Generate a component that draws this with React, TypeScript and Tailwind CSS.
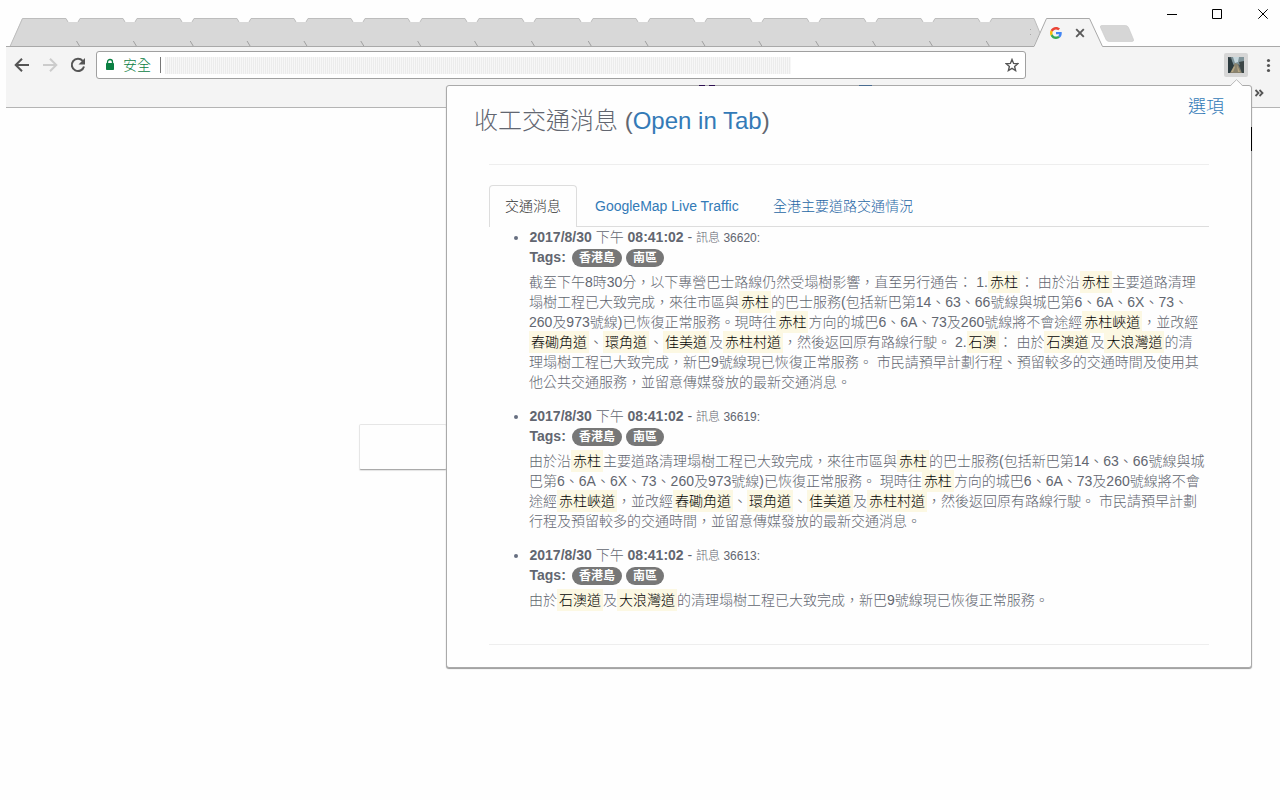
import React from "react";

const seams = Array.from({ length: 17 }, (_, i) => i * 57);

function stripPath() {
  let d = "M10 46.5 L22 18.5";
  seams.forEach((o) => {
    d += ` L${66 + o} 18.5 L${68 + o} 22 L${78 + o} 22 L${80 + o} 18.5`;
  });
  return d + " L1034 18.5 L1040 33 L1034 46.5 Z";
}

function topEdges() {
  let d = "M10 46.5 L22.5 18.5 L66 18.5 L68 22";
  seams.forEach((o) => {
    const end = o === 912 ? 1034 : 123 + o;
    d += ` M${78 + o} 22 L${80 + o} 18.5 L${end} 18.5`;
    d += o === 912 ? " L1040 33" : ` L${125 + o} 22`;
  });
  return d;
}

function TabStrip() {
  return (
    <svg className="block h-[46px] w-full shrink-0 overflow-visible" viewBox="0 0 1280 46">
      <path d={stripPath()} fill="#d8d8d8" />
      <path d={topEdges()} fill="none" stroke="#bdbdbd" />
      {seams.map((o) => (
        <path key={o} d={`M${76.5 + o * 0.9975} 41 L${79.5 + o * 0.9975} 46`} stroke="#a0a0a0" />
      ))}
      <path d="M1030.500 29v1M1030.500 34v1" stroke="#aaa" />
      <path d="M1033 47 L1047 18.500 H1089.500 L1102.500 47 Z" fill="#f4f4f4" />
      <path d="M6 46.500 H1034 L1046.500 18.500 H1089.500 L1102.500 46.500 H1280" fill="none" stroke="#a9a9a9" />
      <path d="M1101.500 25.500h24q2 0 3 2l5 12q.5 2-1.500 2h-23q-2 0-3-2l-5.500-12q-.5-2 1-2z" fill="#d6d6d6" stroke="#c8c8c8" strokeWidth=".6" />
      <g transform="translate(1050 27) scale(.25)">
        <path fill="#EA4335" d="M24 9.500c3.540 0 6.710 1.220 9.210 3.600l6.850-6.850C35.900 2.380 30.470 0 24 0 14.620 0 6.510 5.380 2.560 13.220l7.980 6.190C12.430 13.720 17.740 9.500 24 9.500z" />
        <path fill="#4285F4" d="M46.980 24.550c0-1.570-.15-3.090-.38-4.550H24v9.020h12.940c-.58 2.960-2.260 5.480-4.780 7.180l7.730 6c4.510-4.180 7.090-10.360 7.090-17.650z" />
        <path fill="#FBBC05" d="M10.530 28.590c-.48-1.450-.76-2.990-.76-4.590s.27-3.140.76-4.590l-7.980-6.190C.92 16.460 0 20.120 0 24c0 3.880.92 7.540 2.560 10.780l7.970-6.190z" />
        <path fill="#34A853" d="M24 48c6.480 0 11.930-2.130 15.890-5.810l-7.730-6c-2.150 1.450-4.920 2.300-8.160 2.300-6.260 0-11.570-4.220-13.470-9.910l-7.980 6.190C6.510 42.620 14.620 48 24 48z" />
      </g>
      <path d="M1076.200 29.200l7.600 7.600M1083.800 29.200l-7.600 7.600" stroke="#5a5a5a" strokeWidth="1.900" />
      <path d="M1167 14.500h10M1212.500 9.500h9v9h-9zM1258.300 9.300l9.400 9.400M1267.700 9.300l-9.400 9.400" fill="none" stroke="#000" />
    </svg>
  );
}

function Toolbar() {
  return (
    <div className="ml-[6px] h-[61px] border-b border-[#b4b4b4] bg-[#f4f4f4]">
      <div className="flex items-start pt-[4px]">
        <svg className="h-[28px] w-[90px] shrink-0" viewBox="6 51 90 28" fill="none">
          <path d="M29 65H16.200M22 58.700L15.700 65l6.300 6.300" stroke="#555" strokeWidth="2" />
          <path d="M43 65h12.800M50 58.700l6.300 6.300l-6.300 6.300" stroke="#ccc" strokeWidth="2" />
          <path d="M82.700 60.800a6.200 6.200 0 1 0 1.300 5.700" stroke="#555" strokeWidth="2" />
          <path d="M85 58v6.500h-6.500z" fill="#555" />
        </svg>
        <div className="flex h-[28px] w-[930px] items-center rounded-[3px] border border-[#a0a0a0] bg-white">
          <svg className="ml-[8px] h-[14px] w-[10px]" viewBox="0 0 10 14">
            <path d="M2.500 6V4a2.500 2.500 0 0 1 5 0v2" fill="none" stroke="#0b8043" strokeWidth="1.300" />
            <rect x="1" y="5" width="8" height="7" rx=".8" fill="#0b8043" />
          </svg>
          <span className="ml-[8px] w-[28px] whitespace-nowrap text-[14px] font-light leading-[20px] text-[#0b8043]">安全</span>
          <div className="ml-[9px] h-[16px] w-px bg-[#777]" />
          <div className="ml-[4px] h-[17px] w-[626px] bg-[repeating-linear-gradient(90deg,#ececec_0px,#ececec_1px,#f7f7f7_1px,#f7f7f7_2px)]" />
          <svg className="ml-auto mr-[6px] h-[14px] w-[14px]" viewBox="0 0 14 14" fill="none">
            <path d="M7 1.500l1.600 3.900 4.200.3-3.200 2.700 1 4.100L7 10.300l-3.600 2.200 1-4.100L1.200 5.700l4.200-.3z" stroke="#555" strokeWidth="1.400" />
          </svg>
        </div>
        <div className="ml-[198px] mt-[2px] flex h-[24px] w-[24px] items-center justify-center rounded-[2px] bg-[#d6d6d6]">
          <svg className="h-[16px] w-[16px]" viewBox="0 0 16 16">
            <rect width="16" height="16" fill="#47545a" />
            <path d="M3 0h13v5l-4 3-3-1-4 1z" fill="#7f9399" />
            <path d="M5 0h6l-1 5-3 1z" fill="#c5d6dc" />
            <path d="M7 6l3 1 4 9H1z" fill="#8a836e" />
            <path d="M0 0l3 2 3 7-4 7H0z" fill="#2c3b3f" />
            <path d="M11 5l5-1v12h-2z" fill="#3c4646" />
            <path d="M6 9l1 1-2 5H3zM9 8l3 7h-2z" fill="#b5a582" />
          </svg>
        </div>
        <svg className="ml-[18px] mt-[5px] h-[18px] w-[6px]" viewBox="0 0 6 18" fill="#555">
          <circle cx="2.500" cy="4.500" r="1.600" /><circle cx="2.500" cy="9.500" r="1.600" /><circle cx="2.500" cy="14.500" r="1.600" />
        </svg>
      </div>
      <svg className="ml-auto mr-[16px] mt-[10px] h-[8px] w-[10px]" viewBox="0 0 10 8" fill="none" stroke="#555" strokeWidth="1.800">
        <path d="M1.500 1l3 3-3 3M5.500 1l3 3-3 3" />
      </svg>
    </div>
  );
}

function M({ children }: { children: React.ReactNode }) {
  return <mark className="bg-[#fcf8e3] px-[2px] py-[2.800px] text-black">{children}</mark>;
}

function Item({ id, lines }: { id: string; lines: React.ReactNode[] }) {
  return (
    <li className="mb-[14px]">
      <div className="relative h-[20px] whitespace-nowrap pl-[0.500px]">
        <span className="absolute -left-[15px] top-[9px] h-[4px] w-[4px] rounded-full bg-[#666e80]" />
        <span className="font-bold">2017/8/30</span> 下午 <span className="font-bold">08:41:02</span> - <span className="text-[12px]">訊息 {id}:</span>
      </div>
      <div className="mb-[5px] flex h-[20px] items-center gap-[4px]">
        <span className="mr-[2px] w-[37px] pl-[0.500px] font-bold">Tags:</span>
        {["香港島", "南區"].map((t) => (
          <span key={t} className="mt-px h-[18px] rounded-full bg-[#777] px-[7px] text-[12px] font-bold leading-[18px] text-white">{t}</span>
        ))}
      </div>
      {lines.map((line, i) => (
        <div key={i} className="h-[20px] whitespace-nowrap">{line}</div>
      ))}
    </li>
  );
}

const items: { id: string; lines: React.ReactNode[] }[] = [
  {
    id: "36620",
    lines: [
      <>截至下午8時30分，以下專營巴士路線仍然受塌樹影響，直至另行通告： 1.<M>赤柱</M>： 由於沿<M>赤柱</M>主要道路清理</>,
      <>塌樹工程已大致完成，來往市區與<M>赤柱</M>的巴士服務(包括新巴第14、63、66號線與城巴第6、6A、6X、73、</>,
      <>260及973號線)已恢復正常服務。現時往<M>赤柱</M>方向的城巴6、6A、73及260號線將不會途經<M>赤柱峽道</M>，並改經</>,
      <><M>舂磡角道</M>、<M>環角道</M>、<M>佳美道</M>及<M>赤柱村道</M>，然後返回原有路線行駛。 2.<M>石澳</M>： 由於<M>石澳道</M>及<M>大浪灣道</M>的清</>,
      <>理塌樹工程已大致完成，新巴9號線現已恢復正常服務。 市民請預早計劃行程、預留較多的交通時間及使用其</>,
      <>他公共交通服務，並留意傳媒發放的最新交通消息。</>,
    ],
  },
  {
    id: "36619",
    lines: [
      <>由於沿<M>赤柱</M>主要道路清理塌樹工程已大致完成，來往市區與<M>赤柱</M>的巴士服務(包括新巴第14、63、66號線與城</>,
      <>巴第6、6A、6X、73、260及973號線)已恢復正常服務。 現時往<M>赤柱</M>方向的城巴6、6A、73及260號線將不會</>,
      <>途經<M>赤柱峽道</M>，並改經<M>舂磡角道</M>、<M>環角道</M>、<M>佳美道</M>及<M>赤柱村道</M>，然後返回原有路線行駛。 市民請預早計劃</>,
      <>行程及預留較多的交通時間，並留意傳媒發放的最新交通消息。</>,
    ],
  },
  {
    id: "36613",
    lines: [<>由於<M>石澳道</M>及<M>大浪灣道</M>的清理塌樹工程已大致完成，新巴9號線現已恢復正常服務。</>],
  },
];

function Popup() {
  return (
    <section className="absolute left-[446px] top-[85px] h-[583px] w-[806px] rounded-[3px] border border-[#aaa] bg-[#fefefe] text-[#626670] shadow-[0_1px_1px_#999]">
      <svg className="absolute left-[783px] top-[-7px] h-[8px] w-[13px]" viewBox="0 0 13 8">
        <path d="M0.500 7L6.500 1l6 6v1H.5z" fill="#fefefe" />
        <path d="M0.500 6.500L6.500 .7l6 5.800" fill="none" stroke="#bbb" />
      </svg>
      <span className="absolute left-[252px] top-[-1px] h-px w-[6px] bg-[#2e1052]" />
      <span className="absolute left-[262px] top-[-1px] h-px w-[6px] bg-[#2e1052]" />
      <span className="absolute left-[412px] top-[-1px] h-px w-[13px] bg-[#4a6c90]" />
      <span className="absolute right-[-1px] top-[41px] h-[24px] w-px bg-black" />
      <header className="flex h-[78px] justify-between pl-[27px] pr-[27px]">
        <h1 className="whitespace-nowrap pt-[18.500px] text-[24px] font-light leading-[32px]">
          收工交通消息 (<span className="text-[#337ab7]">Open in Tab</span>)
        </h1>
        <a className="pt-[8px] text-[18px] font-light leading-[26px] text-[#337ab7]">選項</a>
      </header>
      <div className="mx-[42px] border-y border-[#eee] pt-[20px] pb-[20px]">
        <nav className="flex h-[42px] border-b border-[#ddd] text-[14px] font-light leading-[20px] text-[#337ab7]">
          <span className="h-[42px] w-[88px] rounded-t-[4px] border border-b-0 border-[#ddd] bg-[#fefefe] pl-[15px] pt-[10px] text-[#333]">交通消息</span>
          <span className="w-[178px] whitespace-nowrap pl-[18px] pt-[11px]">GoogleMap Live Traffic</span>
          <span className="whitespace-nowrap pl-[18px] pt-[11px] text-[#1f66a5]">全港主要道路交通情況</span>
        </nav>
        <ul className="pl-[40px] text-[14px] font-light leading-[20px]">
          {items.map((it) => <Item key={it.id} {...it} />)}
        </ul>
      </div>
    </section>
  );
}

export default function App() {
  return (
    <div className="relative flex h-[800px] w-[1280px] flex-col overflow-hidden bg-[#fefefe] font-['Liberation_Sans','Noto_Sans_CJK_TC',sans-serif]">
      <TabStrip />
      <div className="h-px w-full shrink-0" />
      <Toolbar />
      <main className="pl-[359px] pt-[316px]">
        <div className="h-[46px] w-[88px] rounded-[2px] border border-[#e6e6e6] border-b-[#aaa] shadow-[0_1px_1px_#e4e4e4]" />
      </main>
      <Popup />
    </div>
  );
}
